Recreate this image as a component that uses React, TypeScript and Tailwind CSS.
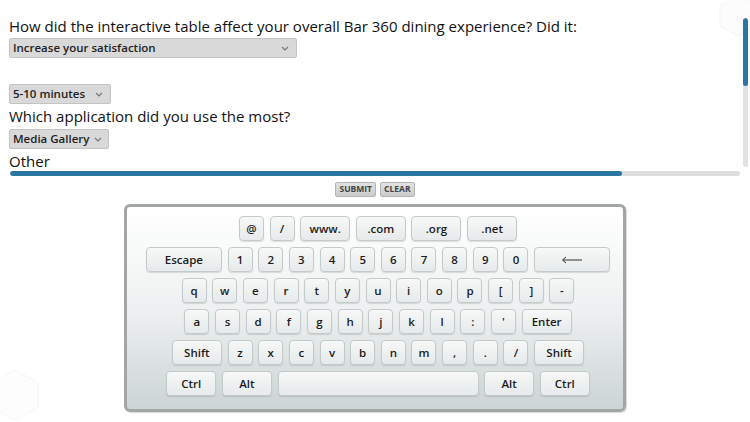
import React from "react";

const FONT = { fontFamily: '"Open Sans", "Liberation Sans", sans-serif' };

const Chevron = () => (
  <svg width="8" height="5" viewBox="0 0 8 5" className="shrink-0">
    <path d="M1 1 L4 4 L7 1" fill="none" stroke="#777" strokeWidth="1.2" />
  </svg>
);

const Select = ({ label, width }: { label: string; width: string }) => (
  <div
    className={`${width} h-[20px] flex items-center justify-between gap-[5px] pl-[3px] pr-[7px] bg-[#d9d9d9] border border-[#c4c4c4] rounded-[2px] text-[11.5px] font-semibold text-[#222] whitespace-nowrap`}
  >
    <span>{label}</span>
    <Chevron />
  </div>
);

const Key = ({ children, w = "w-[25px]" }: { children?: React.ReactNode; w?: string }) => (
  <div
    className={`${w} h-[25px] shrink-0 flex items-center justify-center rounded-[4px] border border-[#c3caca] bg-gradient-to-b from-[#f7f8f8] to-[#e6eaea] shadow-[0_1px_1px_rgba(0,0,0,0.12)] text-[11.5px] font-semibold text-[#1c1c1c]`}
  >
    {children}
  </div>
);

const Row = ({ children }: { children: React.ReactNode }) => (
  <div className="flex justify-center gap-[5.67px]">{children}</div>
);

const singles = (s: string[]) => s.map((k, i) => <Key key={i}>{k}</Key>);

const BackArrow = () => (
  <svg width="22" height="8" viewBox="0 0 22 8">
    <path d="M21 4 H2 M5 1 L1.5 4 L5 7" fill="none" stroke="#333" strokeWidth="1" />
  </svg>
);

export default function App() {
  return (
    <div className="relative w-[750px] h-[422px] bg-white overflow-hidden text-[#111]" style={FONT}>
      <svg className="absolute right-0 top-0" width="40" height="45" viewBox="0 0 40 45">
        <path d="M10 5 L28 -4 L46 5 L46 26 L28 36 L10 26 Z" fill="#fcfcfc" stroke="#f4f4f4" strokeWidth="1" />
      </svg>
      <svg className="absolute left-0 bottom-0" width="50" height="60" viewBox="0 0 50 60">
        <path d="M-8 20 L14 8 L38 20 L38 46 L14 58 L-8 46 Z" fill="#fdfdfd" stroke="#f5f5f5" strokeWidth="1" />
      </svg>

      <div className="relative flex h-[180px]">
        <div className="w-[743px] pl-[9px] pt-[17px]">
          <p className="text-[15px] leading-[18px] font-medium whitespace-nowrap">
            How did the interactive table affect your overall Bar 360 dining experience? Did it:
          </p>
          <div className="mt-[3px]">
            <Select label="Increase your satisfaction" width="w-[288px]" />
          </div>
          <div className="h-[26px]" />
          <Select label="5-10 minutes" width="w-[102px]" />
          <p className="mt-[3px] text-[15px] leading-[18px] font-medium">Which application did you use the most?</p>
          <div className="mt-[4px]">
            <Select label="Media Gallery" width="w-[100px]" />
          </div>
          <p className="mt-[3px] text-[15px] leading-[18px] font-medium">Other</p>
          <div className="mt-[1px] ml-[1px] w-[730px] h-[5px] rounded-full bg-[#dedede] overflow-hidden">
            <div className="h-full w-[612px] rounded-full bg-[#2a78a0]" />
          </div>
        </div>
        <div className="pt-[18px]">
          <div className="w-[5px] h-[149px] rounded-full bg-[#e2e2e2] overflow-hidden">
            <div className="w-full h-[68px] rounded-full bg-[#2a78a0]" />
          </div>
        </div>
      </div>

      <div className="relative flex justify-center gap-[4px] mt-[2px]">
        <button className="h-[15px] px-[3px] rounded-[2px] border border-[#b4b4b4] bg-gradient-to-b from-[#e2e2e2] to-[#cbcbcb] text-[8.5px] font-bold text-[#444] leading-none">
          SUBMIT
        </button>
        <button className="h-[15px] px-[3px] rounded-[2px] border border-[#b4b4b4] bg-gradient-to-b from-[#e2e2e2] to-[#cbcbcb] text-[8.5px] font-bold text-[#444] leading-none">
          CLEAR
        </button>
      </div>

      <div className="relative mx-auto mt-[7px] w-[502px] h-[208px] rounded-[6px] border-[3px] border-[#a3a6a6] bg-gradient-to-b from-[#ffffff] via-[#eef1f1] to-[#ccd4d4] shadow-[1px_1px_1px_rgba(0,0,0,0.15)]">
        <div className="flex flex-col gap-[6px] pt-[9px] pl-[6px]">
          <Row>
            <Key>@</Key>
            <Key>/</Key>
            <Key w="w-[50px]">www.</Key>
            <Key w="w-[50px]">.com</Key>
            <Key w="w-[50px]">.org</Key>
            <Key w="w-[50px]">.net</Key>
          </Row>
          <Row>
            <Key w="w-[76px]">Escape</Key>
            {singles(["1", "2", "3", "4", "5", "6", "7", "8", "9", "0"])}
            <Key w="w-[76px]">
              <BackArrow />
            </Key>
          </Row>
          <Row>{singles(["q", "w", "e", "r", "t", "y", "u", "i", "o", "p", "[", "]", "-"])}</Row>
          <Row>
            {singles(["a", "s", "d", "f", "g", "h", "j", "k", "l", ":", "'"])}
            <Key w="w-[50px]">Enter</Key>
          </Row>
          <Row>
            <Key w="w-[50px]">Shift</Key>
            {singles(["z", "x", "c", "v", "b", "n", "m", ",", ".", "/"])}
            <Key w="w-[50px]">Shift</Key>
          </Row>
          <Row>
            <Key w="w-[50px]">Ctrl</Key>
            <Key w="w-[50px]">Alt</Key>
            <Key w="w-[201px]" />
            <Key w="w-[50px]">Alt</Key>
            <Key w="w-[50px]">Ctrl</Key>
          </Row>
        </div>
      </div>
    </div>
  );
}
